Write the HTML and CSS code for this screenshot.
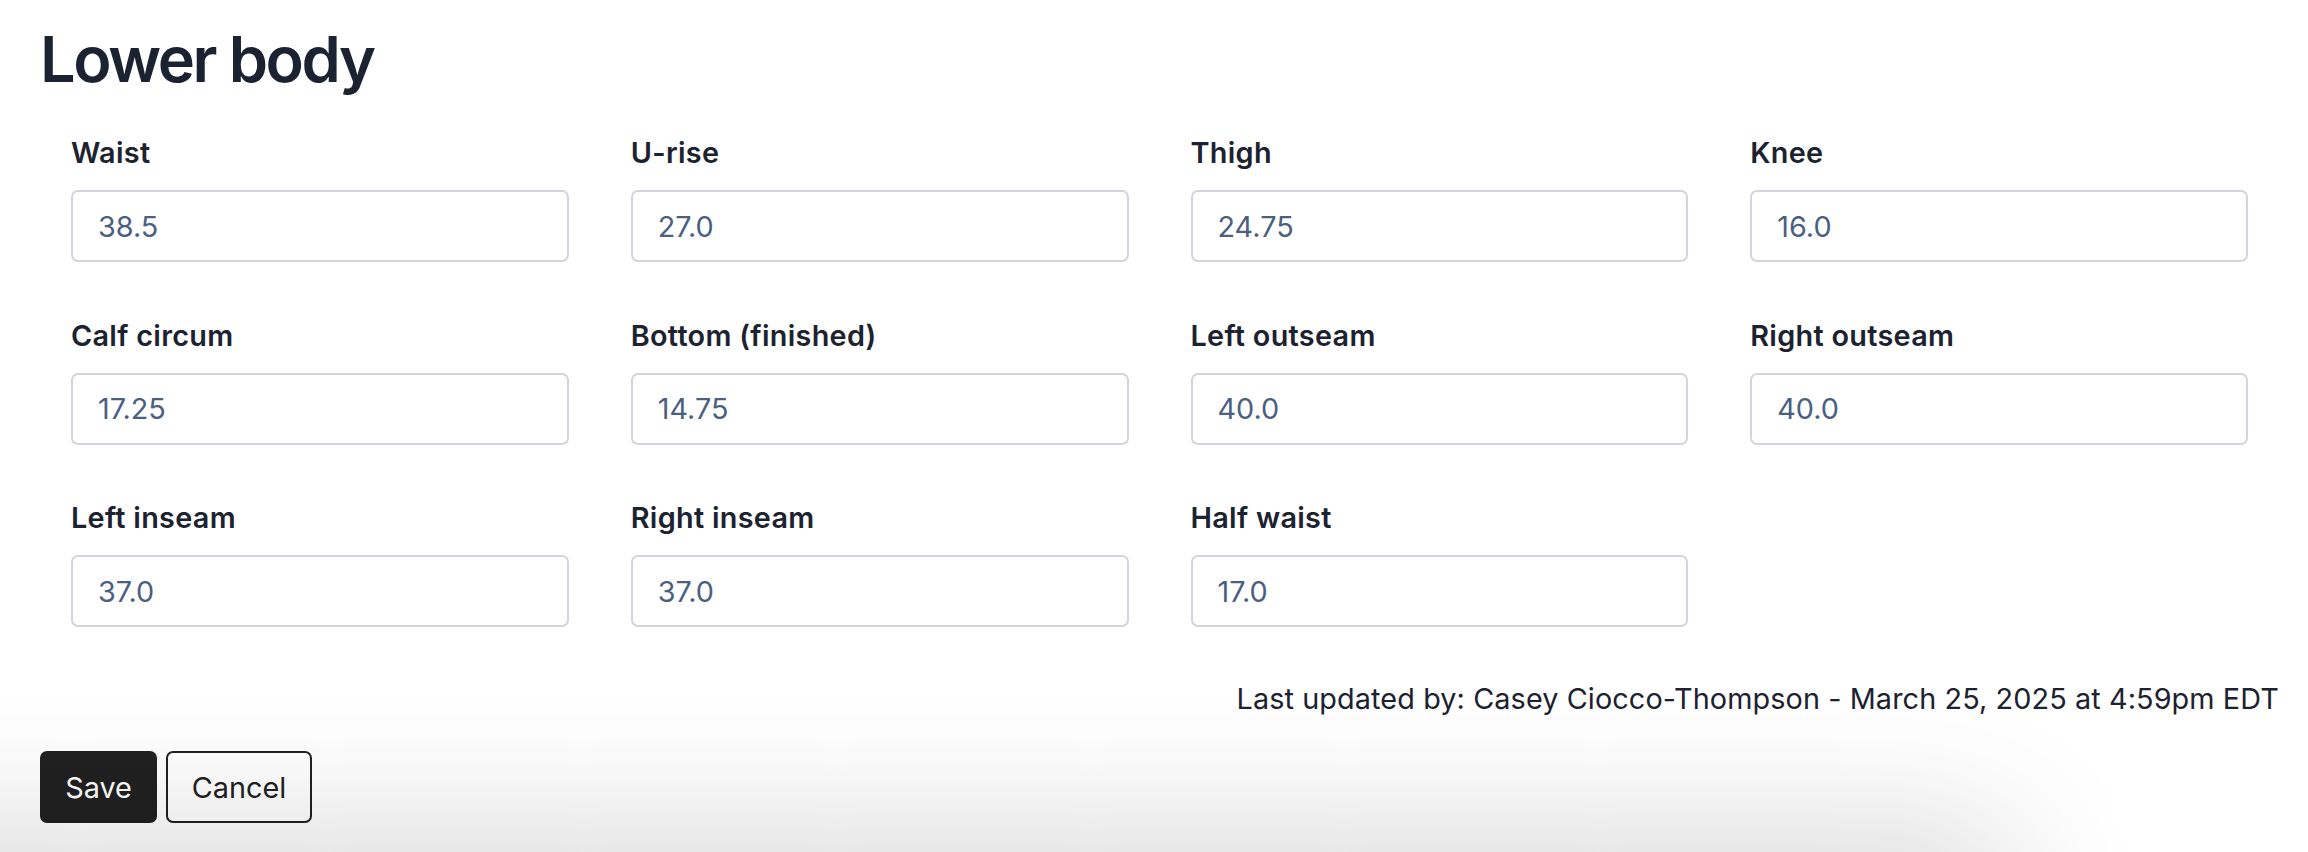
FILE: index.html
```html
<!DOCTYPE html>
<html lang="en">
<head>
<meta charset="utf-8">
<title>Lower body</title>
<link rel="stylesheet" href="styles.css">
</head>
<body>
<main class="page">
  <h1 class="title">Lower body</h1>
  <form class="form">
    <div class="grid">
      <div class="field"><label class="label">Waist</label><input class="input" type="text" value="38.5"></div>
      <div class="field"><label class="label">U-rise</label><input class="input" type="text" value="27.0"></div>
      <div class="field"><label class="label">Thigh</label><input class="input" type="text" value="24.75"></div>
      <div class="field"><label class="label">Knee</label><input class="input" type="text" value="16.0"></div>
      <div class="field"><label class="label">Calf circum</label><input class="input" type="text" value="17.25"></div>
      <div class="field"><label class="label">Bottom (finished)</label><input class="input" type="text" value="14.75"></div>
      <div class="field"><label class="label">Left outseam</label><input class="input" type="text" value="40.0"></div>
      <div class="field"><label class="label">Right outseam</label><input class="input" type="text" value="40.0"></div>
      <div class="field"><label class="label">Left inseam</label><input class="input" type="text" value="37.0"></div>
      <div class="field"><label class="label">Right inseam</label><input class="input" type="text" value="37.0"></div>
      <div class="field"><label class="label">Half waist</label><input class="input" type="text" value="17.0"></div>
    </div>
    <p class="updated">Last updated by: Casey Ciocco-Thompson - March 25, 2025 at 4:59pm EDT</p>
    <div class="actions">
      <button type="button" class="btn btn-primary">Save</button>
      <button type="button" class="btn btn-secondary">Cancel</button>
    </div>
  </form>
</main>
<div class="shade"></div>
</body>
</html>
```
FILE: styles.css
```css
html, body {
  margin: 0;
  padding: 0;
  background: #ffffff;
}
body {
  font-family: Inter, "Noto Sans", "Liberation Sans", sans-serif;
  color: #1c2230;
  overflow: hidden;
  height: 852px;
}
.page {
  padding: 20px 29px 0 40px;
}
.title {
  margin: 0;
  font-size: 63px;
  line-height: 78px;
  font-weight: 600;
  color: #1b2231;
  letter-spacing: -2.4px;
}
.form {
  margin: 33px 0 0 0;
}
.grid {
  display: grid;
  grid-template-columns: repeat(4, 1fr);
  column-gap: 62px;
  row-gap: 51.3px;
  padding: 0 31px;
}
.field {
  display: flex;
  flex-direction: column;
}
.label {
  font-size: 28.8px;
  line-height: 43.2px;
  font-weight: 600;
  letter-spacing: 0.3px;
  color: #1c2230;
  margin-bottom: 16px;
}
.input {
  box-sizing: border-box;
  height: 72px;
  width: 100%;
  border: 2px solid #d2d6dc;
  border-radius: 7px;
  padding: 0 25px;
  font-family: Inter, "Noto Sans", "Liberation Sans", sans-serif;
  font-size: 28.8px;
  color: #4b5f82;
  background: #ffffff;
  outline: none;
}
.updated {
  margin: 50px 0 0 0;
  text-align: right;
  font-size: 28.8px;
  line-height: 43.2px;
  letter-spacing: 0.1px;
  color: #1c2230;
}
.actions {
  display: flex;
  gap: 9px;
  margin-top: 31px;
}
.btn {
  box-sizing: border-box;
  height: 72px;
  border-radius: 7px;
  font-family: Inter, "Noto Sans", "Liberation Sans", sans-serif;
  font-size: 28.8px;
  padding: 0 22px;
  cursor: pointer;
}
.btn-primary {
  background: #212121;
  color: #ffffff;
  border: 2px solid #212121;
  width: 117px;
}
.btn-secondary {
  background: #ffffff;
  color: #212121;
  border: 2px solid #212121;
  width: 146px;
}
.shade {
  position: fixed;
  left: -200px;
  bottom: -80px;
  width: 2200px;
  height: 80px;
  border-radius: 0 400px 400px 0;
  box-shadow: 0 0 140px 24px rgba(0, 0, 0, 0.16);
  pointer-events: none;
}
```
